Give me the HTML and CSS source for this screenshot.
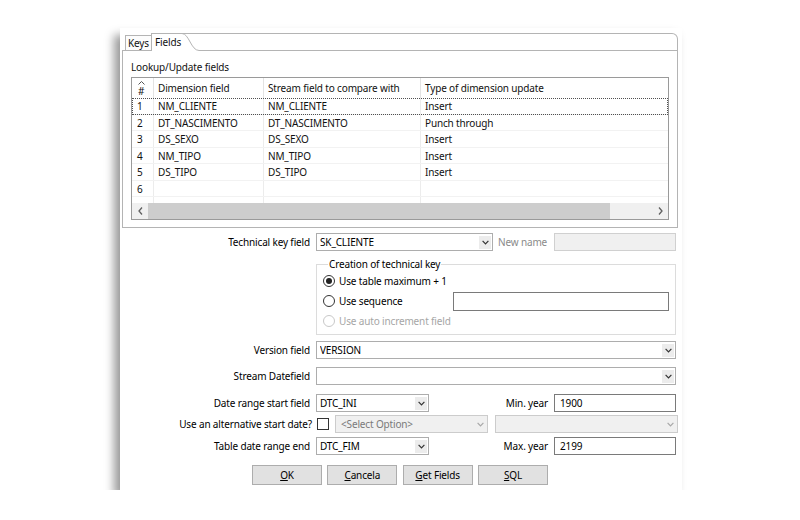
FILE: index.html
```html
<!DOCTYPE html>
<html>
<head>
<meta charset="utf-8">
<link rel="stylesheet" href="styles.css">
</head>
<body>
<div class="panel">
  <div class="folder">
    <div class="tabbar">
      <div class="tab-lead"></div>
      <div class="tab tab-keys">Keys</div>
      <div class="tab tab-fields">Fields</div>
      <svg class="tab-slant" width="17" height="18" viewBox="0 0 17 18"><path d="M0 .5H17M0 .5C7 .5 9 17.5 17 17.5" fill="none" stroke="#b4b4b4"/></svg>
      <div class="tab-fill"></div>
    </div>
    <div class="folder-body">
      <div class="caption">Lookup/Update fields</div>
      <div class="grid">
        <div class="grow ghead">
          <div class="c c-num"><svg class="caret" width="7" height="4" viewBox="0 0 7 4"><path d="M.5 3.5L3.5 .5L6.5 3.5" fill="none" stroke="#555"/></svg><span>#</span></div>
          <div class="c">Dimension field</div>
          <div class="c">Stream field to compare with</div>
          <div class="c c-last">Type of dimension update</div>
        </div>
        <div class="grow focus">
          <div class="c c-num">1</div><div class="c">NM_CLIENTE</div><div class="c">NM_CLIENTE</div><div class="c c-last">Insert</div>
        </div>
        <div class="grow">
          <div class="c c-num">2</div><div class="c">DT_NASCIMENTO</div><div class="c">DT_NASCIMENTO</div><div class="c c-last">Punch through</div>
        </div>
        <div class="grow">
          <div class="c c-num">3</div><div class="c">DS_SEXO</div><div class="c">DS_SEXO</div><div class="c c-last">Insert</div>
        </div>
        <div class="grow">
          <div class="c c-num">4</div><div class="c">NM_TIPO</div><div class="c">NM_TIPO</div><div class="c c-last">Insert</div>
        </div>
        <div class="grow">
          <div class="c c-num">5</div><div class="c">DS_TIPO</div><div class="c">DS_TIPO</div><div class="c c-last">Insert</div>
        </div>
        <div class="grow">
          <div class="c c-num">6</div><div class="c"></div><div class="c"></div><div class="c c-last"></div>
        </div>
        <div class="grow partial">
          <div class="c c-num"></div><div class="c"></div><div class="c"></div><div class="c c-last"></div>
        </div>
        <div class="hscroll">
          <div class="sb-btn"><svg width="5" height="8" viewBox="0 0 5 8"><path d="M4 .5L1 4L4 7.5" fill="none" stroke="#606060" stroke-width="1.3"/></svg></div>
          <div class="sb-thumb"></div>
          <div class="sb-track"></div>
          <div class="sb-btn"><svg width="5" height="8" viewBox="0 0 5 8"><path d="M1 .5L4 4L1 7.5" fill="none" stroke="#606060" stroke-width="1.3"/></svg></div>
        </div>
      </div>
    </div>
  </div>

  <div class="form">
    <div class="frow r-tech">
      <div class="lbl">Technical key field</div>
      <div class="ctrls">
        <div class="combo w-tech"><span class="val">SK_CLIENTE</span><span class="dd"><svg width="7" height="5" viewBox="0 0 7 5"><path d="M.6 .8L3.5 3.8L6.4 .8" fill="none" stroke="#333" stroke-width="1.2"/></svg></span></div>
        <span class="newname">New name</span>
        <div class="tf disabled w-year"></div>
      </div>
    </div>

    <div class="frow r-group">
      <div class="lbl"></div>
      <fieldset class="group">
        <legend>Creation of technical key</legend>
        <div class="radio-row">
          <span class="radio on"></span><span>Use table maximum + 1</span>
        </div>
        <div class="radio-row">
          <span class="radio"></span><span>Use sequence</span>
          <div class="tf w-seq"></div>
        </div>
        <div class="radio-row off">
          <span class="radio"></span><span>Use auto increment field</span>
        </div>
      </fieldset>
    </div>

    <div class="frow r-version">
      <div class="lbl">Version field</div>
      <div class="ctrls">
        <div class="combo w-full"><span class="val">VERSION</span><span class="dd"><svg width="7" height="5" viewBox="0 0 7 5"><path d="M.6 .8L3.5 3.8L6.4 .8" fill="none" stroke="#333" stroke-width="1.2"/></svg></span></div>
      </div>
    </div>

    <div class="frow r-stream">
      <div class="lbl">Stream Datefield</div>
      <div class="ctrls">
        <div class="combo w-full"><span class="val"></span><span class="dd"><svg width="7" height="5" viewBox="0 0 7 5"><path d="M.6 .8L3.5 3.8L6.4 .8" fill="none" stroke="#333" stroke-width="1.2"/></svg></span></div>
      </div>
    </div>

    <div class="frow r-date">
      <div class="lbl">Date range start field</div>
      <div class="ctrls">
        <div class="combo w-date"><span class="val">DTC_INI</span><span class="dd"><svg width="7" height="5" viewBox="0 0 7 5"><path d="M.6 .8L3.5 3.8L6.4 .8" fill="none" stroke="#333" stroke-width="1.2"/></svg></span></div>
        <span class="year-lbl">Min. year</span>
        <div class="tf w-year">1900</div>
      </div>
    </div>

    <div class="frow r-alt">
      <div class="lbl lbl-alt">Use an alternative start date?</div>
      <div class="ctrls">
        <span class="check"></span>
        <div class="combo disabled w-alt1"><span class="val">&lt;Select Option&gt;</span><span class="dd"><svg width="7" height="5" viewBox="0 0 7 5"><path d="M.6 .8L3.5 3.8L6.4 .8" fill="none" stroke="#a8a8a8" stroke-width="1.2"/></svg></span></div>
        <div class="combo disabled w-alt2"><span class="val"></span><span class="dd"><svg width="7" height="5" viewBox="0 0 7 5"><path d="M.6 .8L3.5 3.8L6.4 .8" fill="none" stroke="#a8a8a8" stroke-width="1.2"/></svg></span></div>
      </div>
    </div>

    <div class="frow r-end">
      <div class="lbl">Table date range end</div>
      <div class="ctrls">
        <div class="combo w-date"><span class="val">DTC_FIM</span><span class="dd"><svg width="7" height="5" viewBox="0 0 7 5"><path d="M.6 .8L3.5 3.8L6.4 .8" fill="none" stroke="#333" stroke-width="1.2"/></svg></span></div>
        <span class="year-lbl">Max. year</span>
        <div class="tf w-year">2199</div>
      </div>
    </div>

    <div class="buttons">
      <div class="btn"><u>O</u>K</div>
      <div class="btn"><u>C</u>ancela</div>
      <div class="btn"><u>G</u>et Fields</div>
      <div class="btn"><u>S</u>QL</div>
    </div>
  </div>
</div>
</body>
</html>
```

FILE: styles.css
```css
* { box-sizing: border-box; }
html, body { margin: 0; background: #fff; }
body {
  font-family: "Noto Sans", "Open Sans", sans-serif;
  font-size: 10px;
  letter-spacing: -0.15px;
  color: #111;
}

.panel {
  margin: 28px 0 0 120px;
  width: 562px;
  height: 462px;
  padding: 5px 4px 0 2px;
  background: #fff;
  box-shadow: -6px 7px 9px rgba(0, 0, 0, 0.4);
}

/* tab folder */
.tabbar { display: flex; height: 18px; }
.tab-lead { width: 3px; border-bottom: 1px solid #b4b4b4; }
.tab { line-height: 15px; white-space: nowrap; }
.tab-keys {
  width: 26px;
  margin-top: 2px;
  border: 1px solid #b4b4b4;
  border-right: 0;
  padding-left: 2px;
  background: #fcfcfc;
}
.tab-fields {
  width: 31px;
  border-left: 1px solid #b4b4b4;
  border-top: 1px solid #b4b4b4;
  padding-left: 3px;
  line-height: 17px;
}
.tab-slant { display: block; flex: none; }
.tab-fill {
  flex: 1;
  border: 1px solid #b4b4b4;
  border-left: 0;
  border-top-right-radius: 6px;
}
.folder-body {
  height: 177px;
  border: 1px solid #b4b4b4;
  border-top: 0;
  padding: 9px 8px 0 8px;
}
.caption { line-height: 14px; margin-bottom: 3px; color: #111; }

/* table */
.grid {
  height: 143px;
  border: 1px solid #9a9a9a;
  display: flex;
  flex-direction: column;
}
.grow {
  display: grid;
  grid-template-columns: 22px 110px 157px 1fr;
  height: 16.5px;
  border-bottom: 1px solid #f2f2f2;
}
.ghead { height: 20px; border-bottom: 0; }
.grow.partial { height: 6px; border-bottom: 0; }
.c {
  border-right: 1px solid #ececec;
  padding-left: 4px;
  padding-top: 1px;
  line-height: 15px;
  white-space: nowrap;
  overflow: hidden;
}
.ghead .c { line-height: 20px; padding-top: 0; border-right-color: #e3e3e3; }
.c-last { border-right: 0; }
.c-num { padding-left: 5px; }
.ghead .c-num {
  display: flex;
  flex-direction: column;
  padding-left: 6px;
  line-height: 11px;
}
.ghead .c-num .caret { display: block; margin: 3px 0 0 0; }
.ghead .c-num span { margin-top: 1px; }
.grow.focus { outline: 1px dotted #505050; outline-offset: -1px; }

.hscroll { display: flex; height: 16px; background: #f0f0f0; }
.sb-btn { width: 16px; display: flex; align-items: center; justify-content: center; }
.sb-thumb { width: 462px; height: 16px; background: #cdcdcd; }
.sb-track { flex: 1; }

/* form */
.form { padding-top: 5px; }
.frow { display: flex; align-items: center; }
.lbl {
  width: 194px;
  flex: none;
  text-align: right;
  padding-right: 6px;
  color: #000;
  white-space: nowrap;
}
.lbl-alt { padding-right: 4px; }
.ctrls { width: 360px; display: flex; align-items: center; }

.r-group { margin-top: 6px; align-items: flex-start; }
.r-version { margin-top: 6px; }
.r-stream { margin-top: 8px; }
.r-date { margin-top: 9px; }
.r-alt { margin-top: 3px; }
.r-end { margin-top: 4px; }

.combo {
  display: flex;
  align-items: center;
  height: 18px;
  border: 1px solid #adadad;
  background: #fff;
  padding-left: 3px;
  color: #000;
  flex: none;
}
.combo .val { flex: 1; white-space: nowrap; overflow: hidden; }
.combo .dd {
  width: 12px;
  height: 13px;
  margin-right: 1px;
  background: #ececec;
  display: flex;
  align-items: center;
  justify-content: center;
}
.combo.disabled { background: #f0f0f0; border-color: #cccccc; color: #7a7a7a; padding-left: 5px; }
.combo.disabled .dd { background: transparent; }

.tf {
  height: 18px;
  border: 1px solid #7a7a7a;
  background: #fff;
  padding-left: 5px;
  line-height: 16px;
  color: #000;
  flex: none;
}
.tf.disabled { background: #f0f0f0; border-color: #d0d0d0; }

.w-tech { width: 177px; }
.w-full { width: 360px; }
.w-date { width: 113px; }
.w-year { width: 122px; }
.w-seq { width: 216px; height: 19px; margin-left: auto; margin-right: 6px; }
.w-alt1 { width: 153px; margin-left: 6px; }
.w-alt2 { width: 183px; margin-left: 7px; }

.newname { color: #8a8a8a; margin-left: 5px; flex: 1; }
.year-lbl { margin-left: auto; margin-right: 6px; color: #000; }

.check {
  width: 12px;
  height: 12px;
  border: 1px solid #333;
  background: #fff;
  flex: none;
  margin-left: 1px;
}

/* group */
.group {
  width: 360px;
  height: 78px;
  margin: 0;
  padding: 0 0 0 6px;
  border: 1px solid #dcdcdc;
}
.group legend {
  padding: 0 1px;
  margin-left: 5px;
  line-height: 14px;
  color: #000;
}
.radio-row { display: flex; align-items: center; height: 20px; color: #000; }
.radio {
  width: 12px;
  height: 12px;
  border: 1px solid #333;
  border-radius: 50%;
  margin-right: 4px;
  flex: none;
  display: flex;
  align-items: center;
  justify-content: center;
}
.radio.on::after {
  content: "";
  width: 6px;
  height: 6px;
  border-radius: 50%;
  background: #222;
}
.radio-row.off { color: #a6a6a6; }
.radio-row.off .radio { border-color: #c8c8c8; }

/* buttons */
.buttons {
  display: flex;
  justify-content: center;
  gap: 5.33px;
  margin-top: 10px;
}
.btn {
  width: 70px;
  height: 20px;
  border: 1px solid #adadad;
  background: #e1e1e1;
  text-align: center;
  line-height: 18px;
  color: #000;
}
.btn u { text-decoration: underline; text-underline-offset: 1px; }
```
